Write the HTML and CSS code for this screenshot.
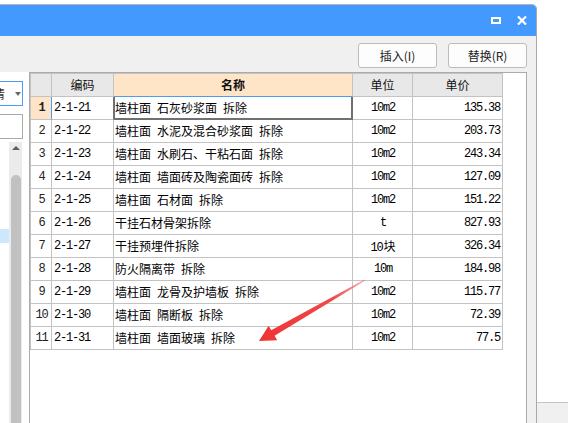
FILE: index.html
```html
<!DOCTYPE html>
<html lang="zh-CN">
<head>
<meta charset="utf-8">
<title>定额替换</title>
<link rel="stylesheet" href="styles.css">
</head>
<body>
<div class="desk">
  <div class="window">
    <div class="titlebar">
      <svg class="ico" width="10" height="7" viewBox="0 0 10 7"><path d="M0 0H10V7H0Z M2 2V5H8V2Z" fill="#fff" fill-rule="evenodd"/></svg>
      <svg class="ico" width="10" height="9" viewBox="0 0 10 9"><path d="M1 0.5L9 8.5M9 0.5L1 8.5" stroke="#fff" stroke-width="2.2"/></svg>
    </div>
    <div class="toolbar">
      <div class="btn">插入(I)</div>
      <div class="btn">替换(R)</div>
    </div>
    <div class="body">
      <div class="side">
        <div class="combo"><span class="combo-text">清</span><span class="caret"></span></div>
        <div class="field"></div>
        <div class="lower">
          <div class="list"><div class="pick"></div></div>
          <div class="scroll"><div class="up"></div><div class="thumb"></div></div>
        </div>
      </div>
      <div class="panel">
        <div class="grid">
          <div class="c hd"></div>
          <div class="c hd">编码</div>
          <div class="c hd hname">名称</div>
          <div class="c hd">单位</div>
          <div class="c hd">单价</div>

          <div class="c num m cur">1</div><div class="c code m curcode">2-1-21</div><div class="c name selcell">墙柱面 石灰砂浆面 拆除</div><div class="c unit m">10m2</div><div class="c price m">135.38</div>
          <div class="c num m">2</div><div class="c code m">2-1-22</div><div class="c name">墙柱面 水泥及混合砂浆面 拆除</div><div class="c unit m">10m2</div><div class="c price m">203.73</div>
          <div class="c num m">3</div><div class="c code m">2-1-23</div><div class="c name">墙柱面 水刷石、干粘石面 拆除</div><div class="c unit m">10m2</div><div class="c price m">243.34</div>
          <div class="c num m">4</div><div class="c code m">2-1-24</div><div class="c name">墙柱面 墙面砖及陶瓷面砖 拆除</div><div class="c unit m">10m2</div><div class="c price m">127.09</div>
          <div class="c num m">5</div><div class="c code m">2-1-25</div><div class="c name">墙柱面 石材面 拆除</div><div class="c unit m">10m2</div><div class="c price m">151.22</div>
          <div class="c num m">6</div><div class="c code m">2-1-26</div><div class="c name">干挂石材骨架拆除</div><div class="c unit m">t</div><div class="c price m">827.93</div>
          <div class="c num m">7</div><div class="c code m">2-1-27</div><div class="c name">干挂预埋件拆除</div><div class="c unit m">10<span class="cjk">块</span></div><div class="c price m">326.34</div>
          <div class="c num m">8</div><div class="c code m">2-1-28</div><div class="c name">防火隔离带 拆除</div><div class="c unit m">10m</div><div class="c price m">184.98</div>
          <div class="c num m">9</div><div class="c code m">2-1-29</div><div class="c name">墙柱面 龙骨及护墙板 拆除</div><div class="c unit m">10m2</div><div class="c price m">115.77</div>
          <div class="c num m">10</div><div class="c code m">2-1-30</div><div class="c name">墙柱面 隔断板 拆除</div><div class="c unit m">10m2</div><div class="c price m">72.39</div>
          <div class="c num m">11</div><div class="c code m">2-1-31</div><div class="c name">墙柱面 墙面玻璃 拆除</div><div class="c unit m">10m2</div><div class="c price m">77.5</div>
        </div>
      </div>
    </div>
  </div>
  <div class="other-win"></div>
  <svg class="arrow" width="568" height="423" viewBox="0 0 568 423">
    <defs>
      <linearGradient id="ag" x1="365" y1="280" x2="259" y2="341" gradientUnits="userSpaceOnUse">
        <stop offset="0" stop-color="#f26a6a" stop-opacity="0.55"/>
        <stop offset="0.3" stop-color="#f04848"/>
        <stop offset="1" stop-color="#ee3535"/>
      </linearGradient>
    </defs>
    <polygon points="365.4,280.5 274.6,335.8 277.2,340.2 259,341 268.6,325.8 271.2,330.2 364.6,279.5" fill="url(#ag)"/>
  </svg>
</div>
</body>
</html>
```
FILE: styles.css
```css
* { box-sizing: border-box; margin: 0; padding: 0; }
html, body { width: 568px; height: 423px; overflow: hidden; background: #fff; }
body { font-family: "Noto Sans CJK SC", sans-serif; font-size: 12px; color: #000; }

.desk { position: relative; width: 568px; height: 423px; overflow: hidden; padding-top: 4px; }

.window {
  width: 537px; height: 440px;
  border-top: 1px solid #b4b4b4; border-right: 1px solid #a9a9a9;
  border-top-right-radius: 5px;
  background: #f0f0f0;
  display: flex; flex-direction: column; overflow: hidden;
}
.titlebar {
  height: 31px; flex: none; background: #4499ff;
  display: flex; justify-content: flex-end; align-items: center;
  gap: 16px; padding-right: 9px;
}
.ico { display: block; }

.toolbar {
  height: 36px; flex: none;
  display: flex; justify-content: flex-end; gap: 11px;
  padding: 7px 9px 0 0;
}
.btn {
  width: 79px; height: 25px;
  border: 1px solid #bcbcbc; border-radius: 3px; background: #fdfdfd;
  display: flex; align-items: center; justify-content: center;
  font-size: 12px; color: #222;
}

.body { flex: 1; display: flex; }

.side { width: 29px; flex: none; background: #fff; padding-top: 9px; display: flex; flex-direction: column; }
.combo {
  margin-left: -10px; width: 33px; height: 25px; flex: none;
  border: 1px solid #4a9cf5; background: #fff;
  display: flex; align-items: center; padding-left: 2px; overflow: hidden;
}
.combo-text { color: #3a3020; line-height: 12px; }
.caret {
  margin-left: 10px; width: 0; height: 0;
  border-style: solid; border-width: 4px 3.5px 0 3.5px;
  border-color: #6a6a6a transparent transparent transparent;
}
.field { margin: 8px 0 0 -10px; width: 33px; height: 25px; flex: none; border: 1px solid #a9a9a9; background: #fff; }
.lower { margin-top: 3px; flex: 1; display: flex; }
.list { width: 9px; flex: none; }
.pick { margin-top: 87px; height: 14px; background: #cce8ff; }
.scroll { width: 13px; flex: none; background: #ebebeb; display: flex; flex-direction: column; align-items: center; }
.up {
  margin-top: 4px; width: 0; height: 0;
  border-style: solid; border-width: 0 4px 4px 4px;
  border-color: transparent transparent #5e5e5e transparent;
}
.thumb { margin-top: 25px; width: 10px; flex: 1; background: #c1c1c1; border-radius: 5px 5px 0 0; }

.panel { width: 498px; flex: none; border: 1px solid #ababab; border-bottom: none; background: #fff; }
.grid {
  display: grid; grid-template-columns: 21px 62px 239px 60px 90px; grid-auto-rows: 23px;
  width: 473px; border-top: 1px solid #c3c3c3; border-left: 1px solid #c3c3c3;
}
.c {
  border-right: 1px solid #c3c3c3; border-bottom: 1px solid #c3c3c3;
  line-height: 22px; white-space: nowrap; overflow: hidden;
}
.hd { background: #e8e8e8; text-align: center; font-size: 12px; color: #111; }
.hname { background: #ffe5c7; font-weight: bold; border-bottom-color: #4a9cf5; }
.m { font-family: "Liberation Mono", monospace; font-size: 12px; letter-spacing: -1.2px; }
.cjk { font-family: "Noto Sans CJK SC", sans-serif; font-size: 12px; letter-spacing: 0; margin-left: 1px; }
.num { text-align: center; color: #222; padding-left: 1px; }
.cur { background: #ffe5c7; font-weight: bold; border-right-color: #4a9cf5; }
.code { padding-left: 2px; }
.curcode { border-right-color: #707070; }
.name { padding-left: 1px; word-spacing: 3.3px; }
.selcell {
  border-right-color: #707070; border-bottom-color: #707070;
  box-shadow: inset 1px 0 0 #707070, inset -1px 0 0 #707070, inset 0 -1px 0 #707070;
}
.unit { text-align: center; padding-left: 1px; }
.price { text-align: right; padding-right: 2px; }

.other-win {
  position: absolute; left: 537px; top: 402px; width: 31px; height: 21px;
  border-top: 1px solid #c4c4c4; background: #f0f0f0;
}
.arrow { position: absolute; left: 0; top: 0; pointer-events: none; }
```
